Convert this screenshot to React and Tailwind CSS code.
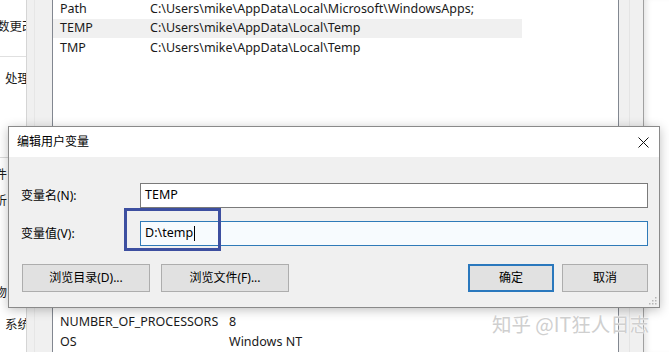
import React from "react";

const font = { fontFamily: '"Noto Sans", "Noto Sans CJK SC", sans-serif' };

function Row({ name, value, hl, h = "h-[20px]", col = "w-[97px]" }) {
  return (
    <div className={`flex items-center ${h} ${hl ? "bg-[#f0f0f0] w-[469px]" : ""}`}>
      <div className={`${col} pl-[7px] shrink-0`}>{name}</div>
      <div className="whitespace-nowrap">{value}</div>
    </div>
  );
}

function Btn({ children, primary, w = "w-[128px]" }) {
  return (
    <div
      className={`${w} h-[28px] flex items-center justify-center bg-[#e1e1e1] text-[12px] text-black ${
        primary ? "border-2 border-[#2a78bd]" : "border border-[#adadad]"
      }`}
    >
      {children}
    </div>
  );
}

export default function App() {
  return (
    <div
      className="relative w-[669px] h-[352px] overflow-hidden bg-white text-[12.5px] text-[#1a1a1a] flex"
      style={font}
    >
      {/* left column */}
      <div className="w-[27px] shrink-0 border-r border-[#d5d5d5] flex flex-col overflow-hidden">
        <div className="h-[57px] flex items-center border-b border-[#e0e0e0] whitespace-nowrap -ml-[3px]">
          <span className="mt-[-2px]">数更改</span>
        </div>
        <div className="h-[45px] flex items-center whitespace-nowrap pl-[5px]">处理</div>
        <div className="h-[56px] border-b border-[#dadada]" />
        <div className="h-[34px] flex items-center whitespace-nowrap -ml-[18px]">文件</div>
        <div className="h-[18px] flex items-center whitespace-nowrap -ml-[18px]">中析</div>
        <div className="h-[93px] flex items-end whitespace-nowrap -ml-[18px]">设物</div>
        <div className="h-[34px] flex items-center whitespace-nowrap pl-[5px] pt-[10px]">系统</div>
      </div>
      {/* gray gutter */}
      <div className="w-[25px] shrink-0 bg-[#f0f0f0] flex">
        <div className="w-[8px] border-r border-[#e6e6e6]" />
      </div>
      {/* list box */}
      <div className="w-[567px] shrink-0 border-x border-[#828790] bg-white flex flex-col">
        <Row name="Path" value="C:\Users\mike\AppData\Local\Microsoft\WindowsApps;" h="h-[19px]" />
        <Row name="TEMP" value="C:\Users\mike\AppData\Local\Temp" hl />
        <Row name="TMP" value="C:\Users\mike\AppData\Local\Temp" />
        <div className="h-[255px] shrink-0" />
        <Row name="NUMBER_OF_PROCESSORS" value="8" col="w-[176px]" />
        <Row name="OS" value="Windows NT" col="w-[176px]" />
      </div>
      {/* scroll area */}
      <div className="w-[25px] shrink-0 bg-[#f0f0f0] border-r border-[#a0a0a0] flex">
        <div className="w-[11px] border-r border-[#e4e4e4]" />
      </div>
      <div className="flex-1 bg-white shadow-[inset_6px_0_6px_-4px_rgba(0,0,0,0.12)]" />

      {/* dialog */}
      <div className="absolute left-[8px] top-[126px] w-[652px] h-[182px] border border-[#8a8a8a] bg-[#f0f0f0] shadow-[0_2px_10px_rgba(0,0,0,0.25)] flex flex-col">
        <div className="h-[30px] bg-white flex items-center justify-between pl-[8px] pr-[10px] shrink-0">
          <span className="text-[12px] text-black">编辑用户变量</span>
          <svg width="11" height="11" viewBox="0 0 11 11">
            <path d="M0.5 0.5 L10.5 10.5 M10.5 0.5 L0.5 10.5" stroke="#111" strokeWidth="1" />
          </svg>
        </div>
        <div className="flex-1 flex flex-col pt-[26px] pl-[12px] pr-[11px] relative">
          <div className="flex items-center h-[25px]">
            <div className="w-[119px] text-[12px] text-black">变量名(N):</div>
            <div className="flex-1 h-[25px] bg-white border border-[#7a7a7a] flex items-center pl-[4px] text-[12.5px] text-black">
              TEMP
            </div>
          </div>
          <div className="flex items-center h-[25px] mt-[13px]">
            <div className="w-[119px] text-[12px] text-black">变量值(V):</div>
            <div className="flex-1 h-[25px] bg-[#f7fbfe] border border-[#2f7ab8] flex items-center pl-[4px] text-[12.5px] text-black">
              D:\temp<span className="inline-block w-px h-[15px] bg-black ml-px" />
            </div>
          </div>
          <div className="flex items-center mt-[18px] pl-[1px]">
            <Btn>浏览目录(D)...</Btn>
            <div className="w-[11px]" />
            <Btn>浏览文件(F)...</Btn>
            <div className="flex-1" />
            <Btn primary w="w-[86px]">确定</Btn>
            <div className="w-[8px]" />
            <Btn w="w-[86px]">取消</Btn>
          </div>
          {/* annotation box */}
          <div className="absolute left-[115px] top-[51px] w-[97px] h-[43px] border-[3px] border-[#3d4fa0]" />
          {/* resize grip */}
          <svg className="absolute right-[2px] bottom-[2px]" width="8" height="8" viewBox="0 0 8 8">
            <rect x="6" y="0" width="1.5" height="1.5" fill="#b5b5b5" />
            <rect x="3" y="3" width="1.5" height="1.5" fill="#b5b5b5" />
            <rect x="6" y="3" width="1.5" height="1.5" fill="#b5b5b5" />
            <rect x="0" y="6" width="1.5" height="1.5" fill="#b5b5b5" />
            <rect x="3" y="6" width="1.5" height="1.5" fill="#b5b5b5" />
            <rect x="6" y="6" width="1.5" height="1.5" fill="#b5b5b5" />
          </svg>
        </div>
      </div>

      {/* watermark */}
      <div
        className="absolute left-[492px] top-[309px] text-[19.5px] text-[#cfcfcf] whitespace-nowrap [text-shadow:0_0_2px_#ffffff,0_0_1px_#ffffff]"
        style={{ fontFamily: '"Noto Sans CJK SC", sans-serif' }}
      >
        知乎 @IT狂人日志
      </div>
    </div>
  );
}
